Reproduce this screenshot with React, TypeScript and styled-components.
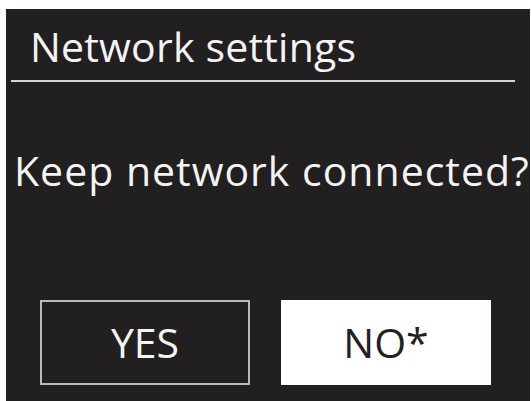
import React from "react";
import styled, { createGlobalStyle } from "styled-components";

const GlobalStyle = createGlobalStyle`
    body {
        margin: 0;
        background: #ffffff;
        font-family: "Open Sans", "DejaVu Sans", sans-serif;
    }
`;

const Screen = styled.div`
    margin: 9px 1px 0 6px;
    height: 392px;
    background: #221f20;
    display: flex;
    flex-direction: column;
    color: #f3f3f3;
`;

const Title = styled.div`
    margin: 17px 0 0 24px;
    font-size: 41px;
    line-height: 41px;
    letter-spacing: 0.2px;
`;

const Divider = styled.div`
    margin: 13px 15px 0 5px;
    height: 2px;
    background: #d6d6d6;
`;

const Question = styled.div`
    margin: 68px 0 0 8px;
    font-size: 41px;
    line-height: 41px;
    letter-spacing: 1px;
    white-space: nowrap;
`;

const Choices = styled.div`
    margin: 109px 0 0 34px;
    display: flex;
    gap: 31px;
`;

const Choice = styled.div<{ $selected?: boolean }>`
    box-sizing: border-box;
    width: 210px;
    height: 85px;
    display: flex;
    align-items: center;
    justify-content: center;
    font-size: 41px;
    line-height: 41px;
    background: ${({ $selected }) => ($selected ? "#ffffff" : "transparent")};
    color: ${({ $selected }) => ($selected ? "#222022" : "#f3f3f3")};
    border: 2px solid ${({ $selected }) => ($selected ? "#ffffff" : "#b9b9b9")};
`;

const App: React.FC = () => (
    <>
        <GlobalStyle />
        <Screen>
            <Title>Network settings</Title>
            <Divider />
            <Question>Keep network connected?</Question>
            <Choices>
                <Choice>YES</Choice>
                <Choice $selected>NO*</Choice>
            </Choices>
        </Screen>
    </>
);

export default App;
